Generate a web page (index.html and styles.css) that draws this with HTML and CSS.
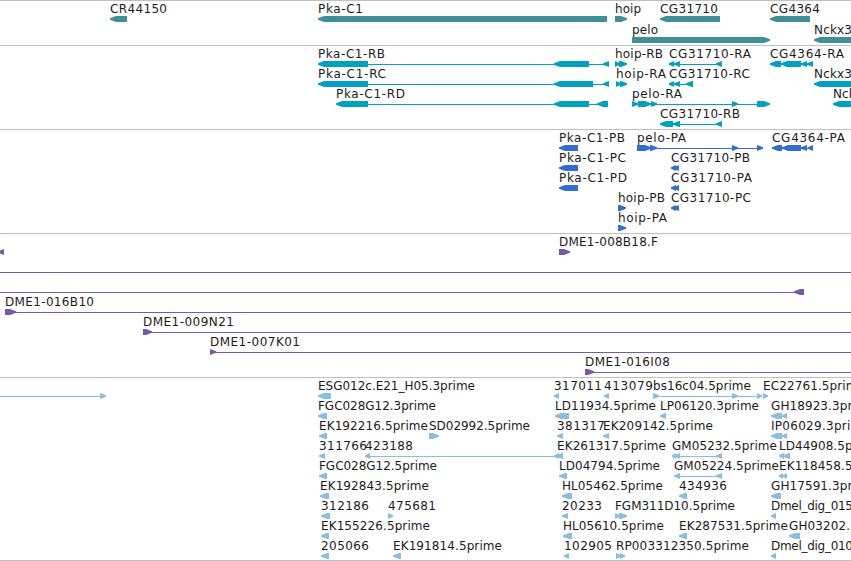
FILE: index.html
```html
<!DOCTYPE html>
<html lang="en">
<head>
    <meta charset="UTF-8">
    <meta name="viewport" content="width=device-width, initial-scale=1.0">
    <title>Genome Browser</title>
    <link rel="stylesheet" href="styles.css">
</head>
<body>
    <div class="tracks">
        <svg class="track genes"></svg>
        <svg class="track transcripts"></svg>
        <svg class="track proteins"></svg>
        <svg class="track bacs"></svg>
        <svg class="track ests"></svg>
    </div>
    <script src="tracks.js"></script>
</body>
</html>
```
FILE: styles.css
```css
body {
    margin: 0;
    background-color: #fff;
    overflow: hidden;
}

.tracks {
    display: flex;
    flex-direction: column;
    border-bottom: 1px solid #c0c0c0;
}

.track {
    box-sizing: border-box;
    display: block;
    width: 100%;
    border-top: 1px solid #c0c0c0;
    overflow: hidden;
}

.genes {
    height: 45px;
    color: #3f8f94;
}

.transcripts {
    height: 84px;
    color: #00a0c0;
}

.proteins {
    height: 104px;
    color: #326ecf;
}

.bacs {
    height: 144px;
    color: #7858a8;
}

.ests {
    height: 183px;
    color: #88bfdf;
}

.block,
.intron {
    fill: currentColor;
}

.intron {
    shape-rendering: crispEdges;
}

.label {
    fill: #1c1c1c;
    font-family: "DejaVu Sans", sans-serif;
    font-size: 12px;
}
```
FILE: tracks.js
```js
// feature: [row, strand, label, label end, [start, end, start, end, ...]]
const tracks = {
    genes: [
        [0, '-', 'CR44150', 167, [110, 127]],
        [0, '-', 'Pka-C1', 363, [318, 607]],
        [0, '+', 'hoip', 641, [615, 627]],
        [0, '-', 'CG31710', 718, [660, 720]],
        [0, '-', 'CG4364', 820, [770, 810]],
        [1, '+', 'pelo', 658, [632, 770]],
        [1, '-', 'Nckx3', 852, [814, 900]]
    ],
    transcripts: [
        [0, '-', 'Pka-C1-RB', 385, [318, 368, 554, 589, 603, 609]],
        [0, '+', 'hoip-RB', 663, [615, 620, 619, 627]],
        [0, '-', 'CG31710-RA', 751, [669, 674, 674, 680, 716, 722]],
        [0, '-', 'CG4364-RA', 844, [770, 781, 781, 801, 801, 807, 807, 813]],
        [1, '-', 'Pka-C1-RC', 386, [318, 368, 554, 593, 603, 609]],
        [1, '+', 'hoip-RA', 666, [616, 621, 620, 627]],
        [1, '-', 'CG31710-RC', 750, [669, 674, 674, 680, 686, 693]],
        [1, '-', 'Nckx3', 852, [814, 900]],
        [2, '-', 'Pka-C1-RD', 405, [336, 368, 554, 589, 597, 608]],
        [2, '+', 'pelo-RA', 682, [632, 638, 638, 651, 651, 657, 732, 738, 757, 770]],
        [2, '-', 'Nckx', 863, [833, 900]],
        [3, '-', 'CG31710-RB', 740, [660, 673, 673, 680, 716, 722]]
    ],
    proteins: [
        [0, '-', 'Pka-C1-PB', 625, [559, 578]],
        [0, '+', 'pelo-PA', 686, [637, 651, 650, 657, 732, 738, 757, 763]],
        [0, '-', 'CG4364-PA', 845, [772, 782, 782, 801, 801, 807, 808, 813]],
        [1, '-', 'Pka-C1-PC', 626, [559, 578]],
        [1, '-', 'CG31710-PB', 750, [671, 676, 674, 679]],
        [2, '-', 'Pka-C1-PD', 627, [559, 578]],
        [2, '-', 'CG31710-PA', 752, [671, 676, 674, 679]],
        [3, '+', 'hoip-PB', 665, [618, 626]],
        [3, '-', 'CG31710-PC', 751, [671, 676, 674, 679]],
        [4, '+', 'hoip-PA', 667, [618, 626]]
    ],
    bacs: [
        [0, '-', '', 0, [-2, 4]],
        [0, '+', 'DME1-008B18.F', 658, [559, 570]],
        [1, '+', '', 0, [-20, -10, 900, 910]],
        [2, '-', '', 0, [-20, -10, 794, 804]],
        [3, '+', 'DME1-016B10', 94, [5, 16, 900, 910]],
        [4, '+', 'DME1-009N21', 234, [143, 152, 900, 910]],
        [5, '+', 'DME1-007K01', 300, [210, 216, 900, 910]],
        [6, '+', 'DME1-016I08', 670, [585, 594, 900, 910]]
    ],
    ests: [
        [0, '+', '', 0, [-20, -10, 100, 106]],
        [0, '-', 'ESG012c.E21_H05.3prime', 475, [318, 331]],
        [0, '-', '317011', 602, [554, 559]],
        [0, '-', '413079', 653, [604, 609]],
        [0, '+', 'bs16c04.5prime', 751, [653, 659, 732, 738, 757, 762]],
        [0, '+', 'EC22761.5prime', 865, [763, 768]],
        [1, '-', 'FGC028G12.3prime', 436, [318, 327]],
        [1, '-', 'LD11934.5prime', 656, [555, 569]],
        [1, '-', 'LP06120.3prime', 759, [660, 666]],
        [1, '-', 'GH18923.3prime', 875, [771, 782, 782, 787]],
        [2, '-', 'EK192216.5prime', 428, [319, 327]],
        [2, '+', 'SD02992.5prime', 530, [429, 439]],
        [2, '-', '381317', 605, [557, 563]],
        [2, '-', 'EK209142.5prime', 713, [603, 609]],
        [2, '-', 'IP06029.3prime', 870, [771, 782, 782, 787]],
        [3, '-', '311766', 367, [319, 325]],
        [3, '-', '423188', 413, [365, 370, 554, 559, 558, 563]],
        [3, '-', 'EK261317.5prime', 666, [557, 563]],
        [3, '-', 'GM05232.5prime', 777, [672, 676, 675, 680, 716, 722]],
        [3, '-', 'LD44908.5prime', 880, [779, 784, 783, 790]],
        [4, '-', 'FGC028G12.5prime', 437, [319, 327]],
        [4, '-', 'LD04794.5prime', 660, [559, 567]],
        [4, '-', 'GM05224.5prime', 779, [674, 680, 716, 722]],
        [4, '-', 'EK118458.5prime', 888, [779, 783, 783, 787]],
        [5, '-', 'EK192843.5prime', 429, [320, 329]],
        [5, '-', 'HL05462.5prime', 663, [562, 572]],
        [5, '-', '434936', 727, [679, 687]],
        [5, '-', 'GH17591.3prime', 875, [771, 781]],
        [6, '-', '312186', 369, [321, 330]],
        [6, '+', '475681', 436, [388, 393]],
        [6, '-', '20233', 602, [562, 568]],
        [6, '+', 'FGM311D10.5prime', 735, [615, 620, 619, 627]],
        [6, '-', 'Dmel_dig_015', 853, [771, 776]],
        [7, '-', 'EK155226.5prime', 430, [321, 329]],
        [7, '-', 'HL05610.5prime', 664, [563, 572]],
        [7, '-', 'EK287531.5prime', 788, [679, 687]],
        [7, '-', 'GH03202.', 850, [789, 800]],
        [8, '-', '205066', 369, [321, 329]],
        [8, '-', 'EK191814.5prime', 502, [393, 401]],
        [8, '-', '102905', 612, [564, 569]],
        [8, '+', 'RP003312350.5prime', 749, [616, 621, 620, 625]],
        [8, '-', 'Dmel_dig_010', 853, [771, 776]]
    ]
};

const firstRow = 15;

function add(parent, name, attrs) {
    const el = document.createElementNS('http://www.w3.org/2000/svg', name);
    for (const key in attrs) {
        el.setAttribute(key, attrs[key]);
    }
    parent.appendChild(el);
    return el;
}

function blockPoints(strand, x1, x2, y) {
    const head = Math.min(6, x2 - x1);
    const tip = strand === '-' ? x1 : x2;
    const tail = strand === '-' ? x2 : x1;
    const neck = strand === '-' ? x1 + head : x2 - head;
    return [tip, y + 2.3, neck, y, tail, y, tail, y + 6, neck, y + 6, tip, y + 3.7].join(' ');
}

for (const name in tracks) {
    const svg = document.querySelector('.' + name);
    const pitch = name === 'genes' ? 21 : 20;

    for (const [row, strand, label, labelEnd, blocks] of tracks[name]) {
        const y = firstRow + row * pitch;
        const start = blocks[0];
        const end = blocks[blocks.length - 1];

        // connecting line between the blocks
        if (blocks.length > 2) {
            add(svg, 'rect', {class: 'intron', x: start + 1, y: y + 3, width: end - start - 2, height: 1});
        }
        for (let i = 0; i < blocks.length; i += 2) {
            add(svg, 'polygon', {class: 'block', points: blockPoints(strand, blocks[i], blocks[i + 1], y)});
        }
        if (label) {
            add(svg, 'text', {class: 'label', x: start, y: y - 3, textLength: labelEnd - start}).textContent = label;
        }
    }
}
```
